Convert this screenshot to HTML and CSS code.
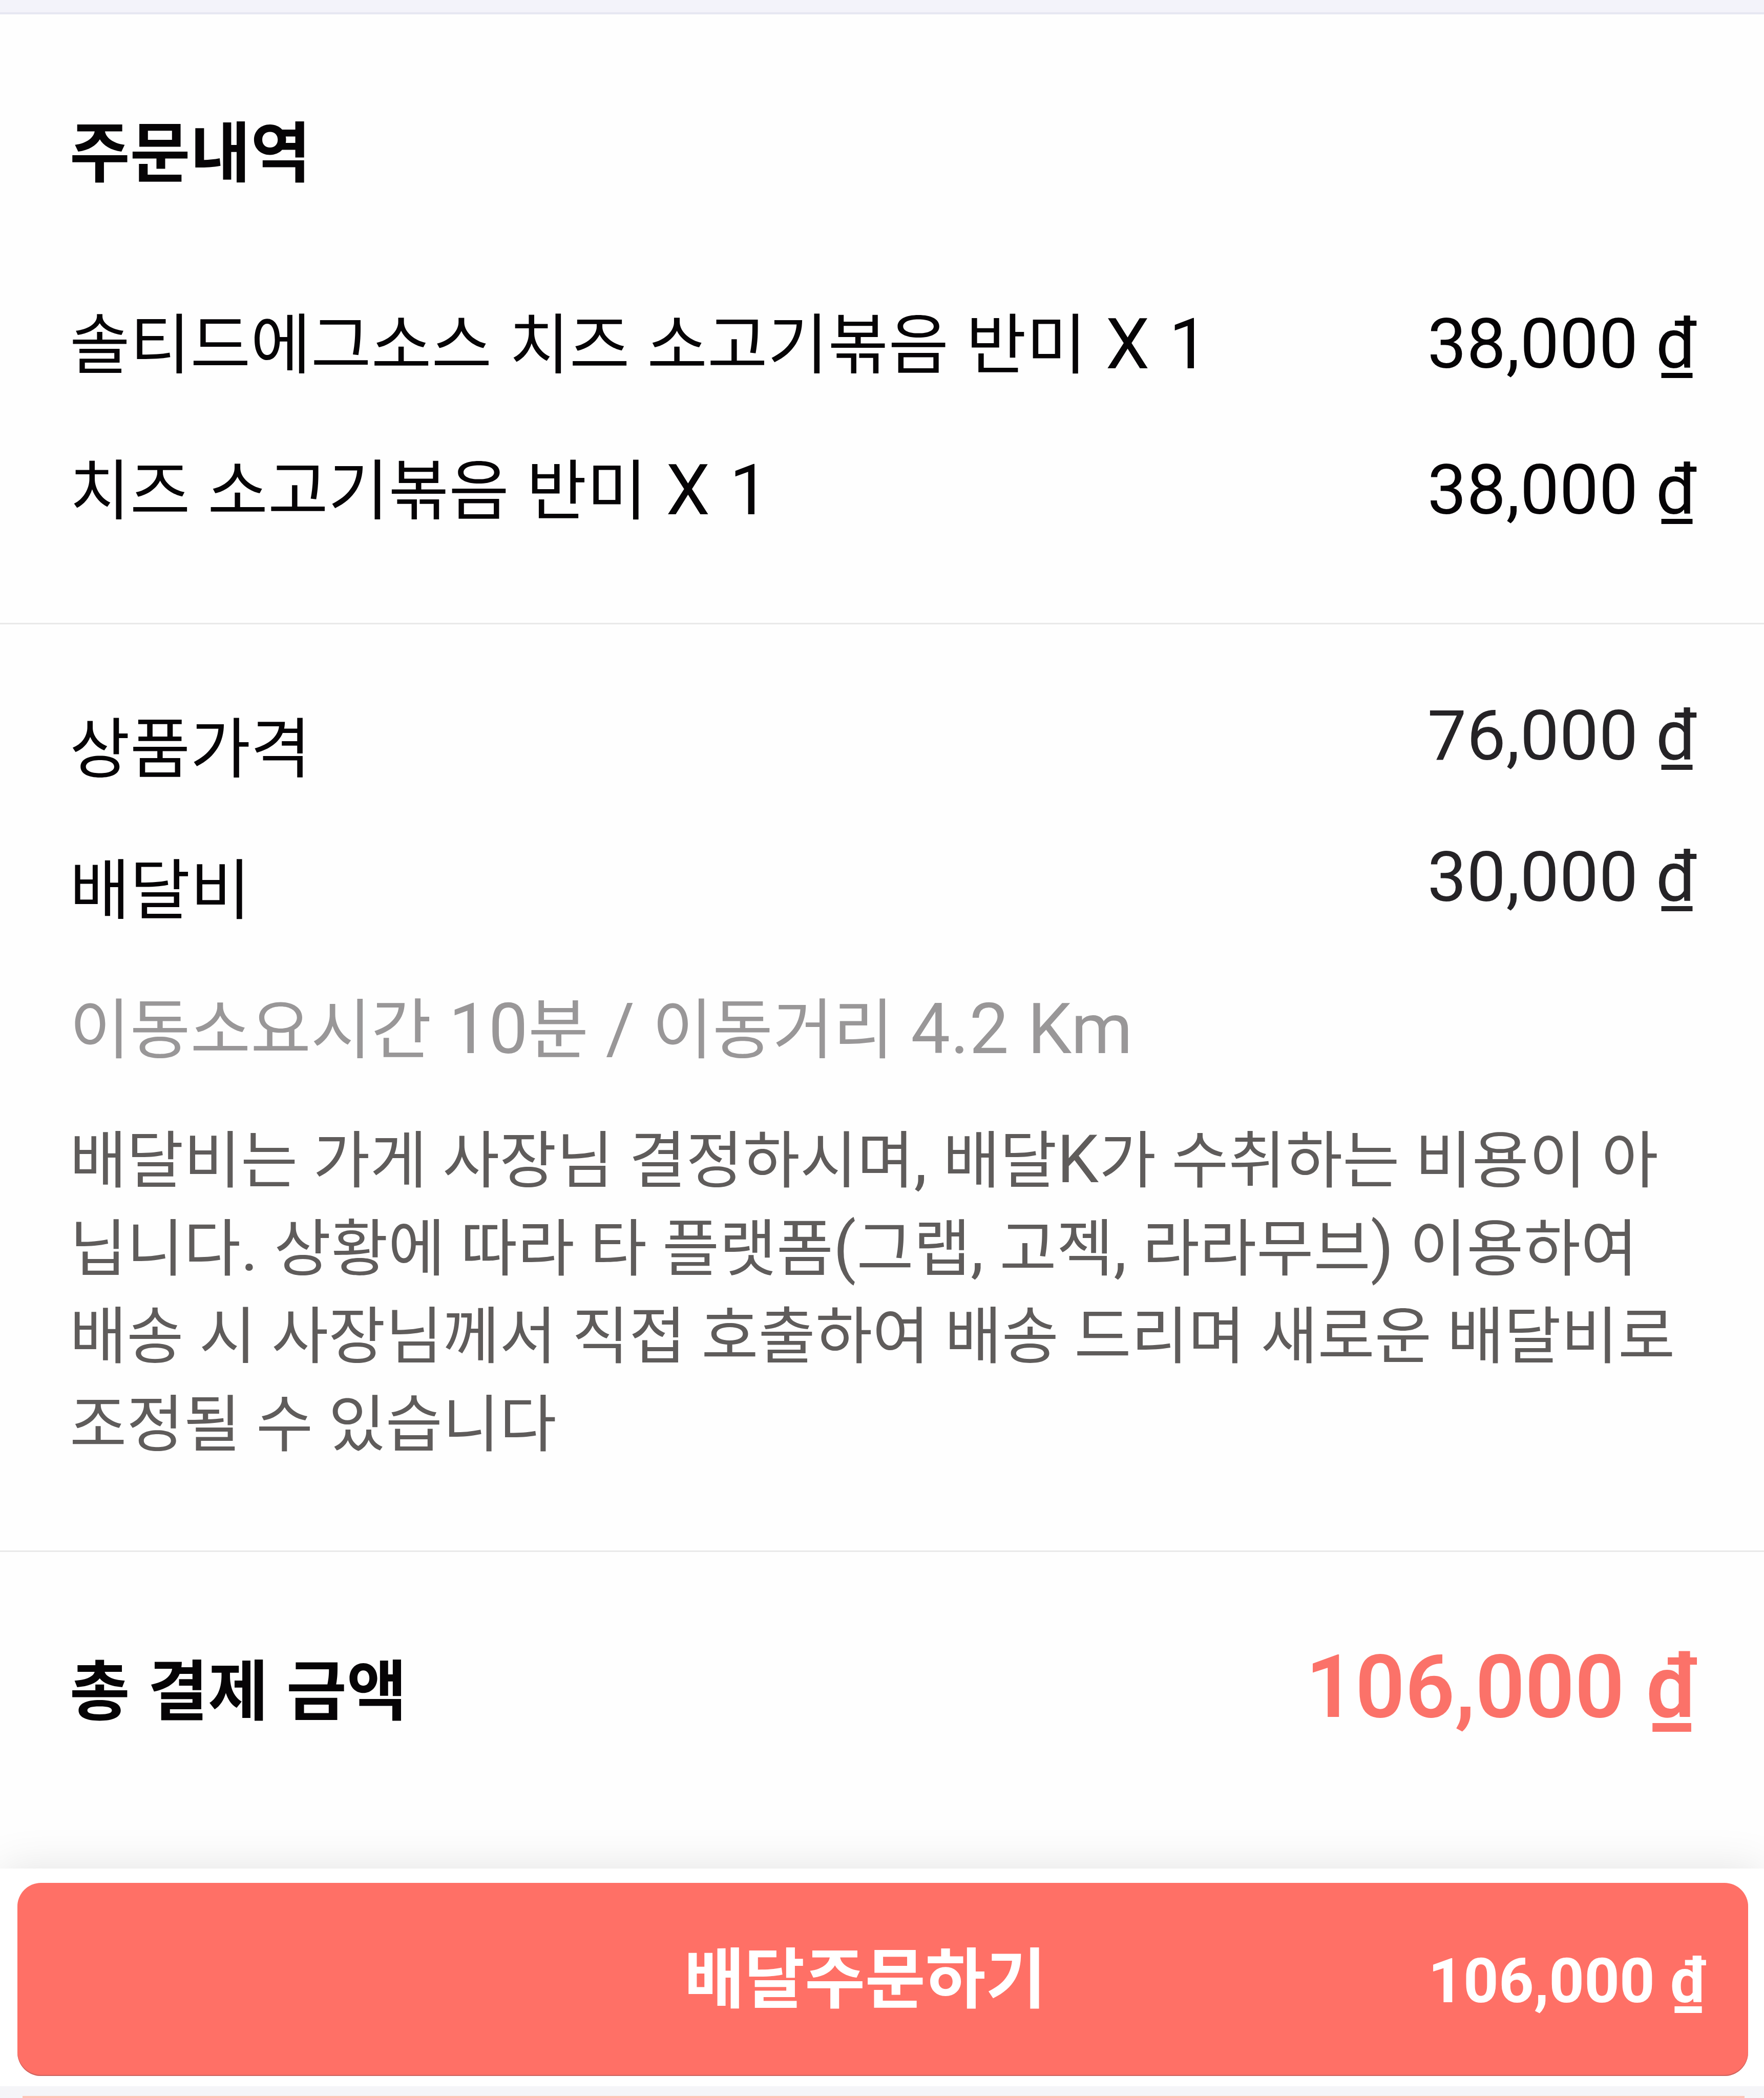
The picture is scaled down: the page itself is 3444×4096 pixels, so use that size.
FILE: index.html
```html
<!DOCTYPE html>
<html lang="ko">
  <head>
    <meta charset="utf-8" />
    <title>주문내역</title>
    <link rel="stylesheet" href="styles.css">
  </head>
  <body>
    <div class="page">
      <div class="top-strip"></div>

      <div class="section order">
        <h2>주문내역</h2>
        <div class="row">
          <span class="label">솔티드에그소스 치즈 소고기볶음 반미<span class="latin"> X 1</span></span>
          <span class="price">38,000 ₫</span>
        </div>
        <div class="row">
          <span class="label">치즈 소고기볶음 반미<span class="latin"> X 1</span></span>
          <span class="price">38,000 ₫</span>
        </div>
      </div>

      <div class="section fees">
        <div class="row">
          <span class="label">상품가격</span>
          <span class="price">76,000 ₫</span>
        </div>
        <div class="row">
          <span class="label">배달비</span>
          <span class="price">30,000 ₫</span>
        </div>
        <div class="distance">
          이동소요시간 <span class="latin">10</span>분
          <span class="latin">/</span> 이동거리
          <span class="latin">4.2 Km</span>
        </div>
        <p class="notice">
          배달비는 가게 사장님 결정하시며<span class="latin">,</span>
          배달<span class="latin">K</span>가 수취하는 비용이 아<br />닙니다<span class="latin">.</span>
          상황에 따라 타 플랫폼<span class="latin">(</span>그랩<span class="latin">,</span>
          고젝<span class="latin">,</span> 라라무브<span class="latin">)</span>
          이용하여<br />배송 시 사장님께서 직접 호출하여 배송 드리며 새로운
          배달비로<br />조정될 수 있습니다
        </p>
      </div>

      <div class="total">
        <span class="total-label">총 결제 금액</span>
        <span class="total-price">106,000 ₫</span>
      </div>

      <div class="bottom-bar">
        <button class="order-button">
          <span class="order-text">배달주문하기</span>
          <span class="order-price">106,000 ₫</span>
        </button>
      </div>
      <div class="next-block">
        <div class="next-edge"></div>
      </div>
    </div>
  </body>
</html>
```
FILE: styles.css
```css
* {
  box-sizing: border-box;
}
body {
  margin: 0;
  background-color: #fefefe;
  font-family: Roboto, "Noto Sans CJK KR", sans-serif;
  font-size: 128px;
  line-height: 192px;
  color: #060406;
}
.page {
  width: 3444px;
  height: 4096px;
  display: flex;
  flex-direction: column;
  overflow: hidden;
}
.top-strip {
  height: 28px;
  flex-shrink: 0;
  background-color: #f3f3fa;
  border-bottom: 4px solid #e6e7f2;
}
.section {
  padding: 0 132px 0 136px;
  border-bottom: 3px solid #e9e9e9;
}
.order {
  height: 1191px;
  padding-top: 177px;
}
h2 {
  margin: 0 0 182px;
  font-size: 128px;
  font-weight: bold;
}
.row {
  display: flex;
  justify-content: space-between;
  white-space: nowrap;
}
.label {
  word-spacing: 2px;
}
.latin {
  font-size: 1.07em;
  line-height: 1;
  letter-spacing: 1px;
}
.price {
  font-size: 136px;
  letter-spacing: 0.5px;
}
.order .row {
  margin-bottom: 93px;
}
.order .price {
  line-height: 186px;
}
.fees {
  height: 1811px;
  padding-top: 149px;
}
.fees .row {
  margin-bottom: 84px;
}
.fees .price {
  height: 192px;
  line-height: 138px;
  color: #252326;
}
.distance {
  margin-top: -4px;
  word-spacing: 2px;
  color: #999798;
  white-space: nowrap;
}
.distance .latin {
  letter-spacing: 0.5px;
}
.notice {
  margin: 74px 0 0;
  font-size: 121px;
  line-height: 171.5px;
  color: #5f5c5b;
  white-space: nowrap;
}
.total {
  display: flex;
  justify-content: space-between;
  height: 618px;
  padding: 178px 132px 0 136px;
}
.total-label {
  font-weight: bold;
  word-spacing: 3px;
}
.total-price {
  font-size: 170px;
  font-weight: 650;
  line-height: 172px;
  color: #fb7269;
}
.bottom-bar {
  height: 425px;
  flex-shrink: 0;
  padding: 28px 31px 0 34px;
  background-color: #fff;
  box-shadow: 0 0 84px -4px rgba(0, 0, 0, 0.12);
}
.order-button {
  display: grid;
  grid-template-columns: 1fr auto 1fr;
  align-items: center;
  width: 100%;
  height: 377px;
  padding: 0 83px 0 14px;
  border: none;
  border-radius: 46px;
  background-color: #ff7066;
  box-shadow: inset 0 -2px 1px #c96460;
  font-family: inherit;
  font-weight: bold;
  color: #fff;
}
.order-text {
  grid-column: 2;
  padding-bottom: 20px;
  font-size: 128px;
}
.order-price {
  padding-top: 6px;
  text-align: right;
  font-size: 120px;
}
.next-block {
  display: flex;
  align-items: flex-end;
  flex: 1;
  padding: 0 38px 0 44px;
  background-color: #f5f5f8;
}
.next-edge {
  flex: 1;
  height: 4px;
  background-color: #ffc4b6;
}
```
